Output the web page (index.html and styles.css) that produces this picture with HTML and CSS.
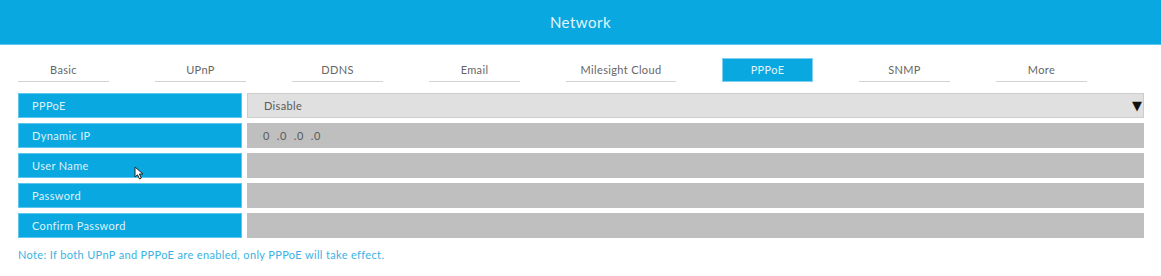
FILE: index.html
```html
<!DOCTYPE html>
<html lang="en">
<head>
  <meta charset="UTF-8">
  <meta name="viewport" content="width=device-width, initial-scale=1.0">
  <title>Network</title>
  <link rel="stylesheet" href="styles.css">
</head>
<body>
  <div class="header">Network</div>

  <div class="tabs">
    <div class="tab">Basic</div>
    <div class="tab">UPnP</div>
    <div class="tab">DDNS</div>
    <div class="tab">Email</div>
    <div class="tab wide">Milesight Cloud</div>
    <div class="tab active">PPPoE</div>
    <div class="tab">SNMP</div>
    <div class="tab">More</div>
  </div>

  <div class="form">
    <div class="row">
      <div class="label">PPPoE</div>
      <div class="value select">Disable<span class="arrow">&#9660;</span></div>
    </div>
    <div class="row">
      <div class="label">Dynamic IP</div>
      <div class="value ip">0 &nbsp;.0 &nbsp;.0 &nbsp;.0</div>
    </div>
    <div class="row">
      <div class="label">User Name</div>
      <div class="value"></div>
    </div>
    <div class="row">
      <div class="label">Password</div>
      <div class="value"></div>
    </div>
    <div class="row">
      <div class="label">Confirm Password</div>
      <div class="value"></div>
    </div>
  </div>

  <p class="note">Note: If both UPnP and PPPoE are enabled, only PPPoE will take effect.</p>

  <!-- mouse pointer caught in the screenshot -->
  <svg class="cursor" width="12" height="14" viewBox="0 0 12 14">
    <path d="M1 1 L1 11 L3.5 8.8 L5.6 13 L7.4 12.1 L5.4 8 L9 8 Z" fill="#fff" stroke="#222" stroke-width="1" stroke-linejoin="round"/>
  </svg>
</body>
</html>
```

FILE: styles.css
```css
* {
  box-sizing: border-box;
}

body {
  margin: 0;
  font-family: "Lato", "Noto Sans", sans-serif;
  font-size: 11px;
  letter-spacing: 0.35px;
  background: #fff;
  position: relative;
}

/**
 * Header
 */
.header {
  height: 45px;
  line-height: 44px;
  background: #0aa8e0;
  border-bottom: 1px solid #5cc6ee;
  color: #e3f4fc;
  text-align: center;
  font-size: 15px;
  letter-spacing: 0.5px;
}

/**
 * Tabs
 */
.tabs {
  display: flex;
  gap: 46px;
  padding-left: 18px;
  margin-top: 13px;
}

.tab {
  width: 91px;
  height: 24px;
  line-height: 23px;
  text-align: center;
  color: #666;
  border-bottom: 1px solid #d2d2d2;
}

.tab.wide {
  width: 110px;
}

.tab.active {
  background: #0aa8e0;
  color: #e3f4fc;
  border: 1px solid #7fcff0;
  line-height: 22px;
}

/**
 * Form rows
 */
.form {
  display: flex;
  flex-direction: column;
  gap: 5px;
  margin: 11px 17px 0 18px;
}

.row {
  display: flex;
  gap: 5px;
  height: 25px;
}

.label {
  width: 224px;
  flex: none;
  background: #0aa8e0;
  border: 1px solid #5cc6ee;
  color: #dff2fb;
  line-height: 23px;
  padding-left: 13px;
}

.value {
  flex: 1;
  background: #bfbfbf;
  color: #5a5a5a;
  line-height: 25px;
  padding-left: 16px;
}

.value.ip {
  letter-spacing: 0.6px;
}

.value.select {
  background: #e0e0e0;
  border: 1px solid #cdcdcd;
  line-height: 23px;
  display: flex;
  justify-content: space-between;
  padding-right: 1px;
}

.arrow {
  color: #111;
  font-size: 13px;
  letter-spacing: 0;
  font-family: "DejaVu Sans", sans-serif;
}

.note {
  margin: 10px 0 0 18px;
  color: #3ab2e3;
  font-size: 11px;
}

.cursor {
  position: absolute;
  left: 134px;
  top: 166px;
}
```
